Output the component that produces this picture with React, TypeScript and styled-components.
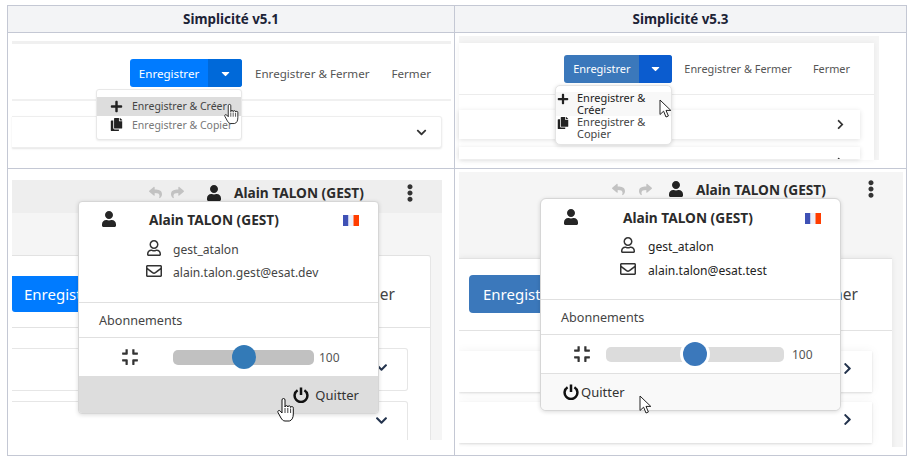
import React from 'react';
import styled, { createGlobalStyle, css } from 'styled-components';
import { FaCaretDown, FaChevronDown, FaChevronRight, FaCompress, FaCopy, FaEllipsisV, FaPlus, FaRegEnvelope, FaRegUser, FaReply, FaShare, FaUser } from 'react-icons/fa';

type Version = 'old' | 'new';

const GlobalStyle = createGlobalStyle`
  html, body {
    margin: 0;
    background: #fff;
    font-family: "Noto Sans", "Open Sans", sans-serif;
    color: #333;
  }
`;

const Table = styled.div`
  box-sizing: border-box;
  width: 900px;
  height: 451px;
  margin: 5px 0 0 7px;
  border: 1px solid #c4c8d4;
  border-width: 1px 0 0 1px;
  display: grid;
  grid-template-columns: 447px 452px;
  grid-template-rows: 27px 136px 287px;
`;

const HeadCell = styled.div`
  background: #f3f4f6;
  border: 1px solid #c4c8d4;
  border-width: 0 1px 1px 0;
  display: flex;
  align-items: center;
  justify-content: center;
  font-size: 13.4px;
  font-weight: 700;
  color: #1c2336;
`;

const Cell = styled.div`
  position: relative;
  border: 1px solid #c4c8d4;
  border-width: 0 1px 1px 0;
  overflow: hidden;
`;

/* top row: screenshots of the action bar */
const BarShot = styled.div<{ $v: Version }>`
  ${p => p.$v === 'old' ? css`
    margin: 8px 3px 0 4px;
    height: 112px;
    border-top: 3px solid #f0f0f0;
  ` : css`
    margin: 3px 27px 0 4px;
    height: 124px;
    background: #f5f5f5;
    padding: 7px 5px 0 0;
    box-sizing: border-box;
  `}
`;

const BarPanel = styled.div<{ $v: Version }>`
  background: #fff;
  height: 100%;
  ${p => p.$v === 'new' && css`box-shadow: 0 0 6px rgba(0, 0, 0, 0.06);`}
`;

const Actions = styled.div<{ $v: Version }>`
  display: flex;
  justify-content: flex-end;
  align-items: center;
  height: ${p => p.$v === 'old' ? '57px' : '52px'};
  padding: ${p => p.$v === 'old' ? '3px 20px 0 0' : '0 24px 0 0'};
  box-sizing: border-box;
  border-bottom: ${p => p.$v === 'old' ? '2px solid #f0f0f0' : '1px solid #ececec'};
`;

const SplitButton = styled.div<{ $v: Version }>`
  display: flex;
  height: 28px;
  width: ${p => p.$v === 'old' ? '112px' : '108px'};
  border-radius: 3px;
  overflow: hidden;
  color: #fff;
  font-size: ${p => p.$v === 'old' ? '11.6px' : '11px'};
  background: ${p => p.$v === 'old' ? '#007bff' : '#3b78bb'};
`;

const SplitLabel = styled.span`
  flex: 1;
  display: flex;
  align-items: center;
  justify-content: center;
`;

const SplitCaret = styled.span<{ $v: Version }>`
  width: ${p => p.$v === 'old' ? '34px' : '33px'};
  display: flex;
  align-items: center;
  justify-content: center;
  font-size: 13px;
  background: ${p => p.$v === 'old' ? '#0069d9' : '#0b5ccf'};
`;

const TextAction = styled.span<{ $v: Version; $gap: number }>`
  margin-left: ${p => p.$gap}px;
  font-size: ${p => p.$v === 'old' ? '11.6px' : '10.9px'};
  color: #555;
  white-space: nowrap;
`;

const BarCard = styled.div<{ $v: Version; $stub?: boolean }>`
  display: flex;
  align-items: center;
  justify-content: flex-end;
  background: #fff;
  font-size: 11px;
  color: #333;
  box-sizing: border-box;
  ${p => p.$v === 'old' ? css`
    height: 32px;
    margin: 15px 9px 0 0;
    padding-right: 14px;
    border: 1px solid #eee;
    border-left: 0;
    border-radius: 0 3px 3px 0;
    box-shadow: 0 1px 2px rgba(0, 0, 0, 0.1);
  ` : css`
    height: ${p.$stub ? '12px' : '29px'};
    margin: ${p.$stub ? '8px' : '15px'} 14px 0 0;
    padding-right: 14px;
    overflow: hidden;
    box-shadow: 0 1px 5px rgba(0, 0, 0, 0.12);
    ${p.$stub && css`
      align-items: flex-start;
      padding-top: 10px;
    `}
  `}
`;

const DropMenu = styled.div<{ $v: Version }>`
  position: absolute;
  background: #fff;
  box-sizing: border-box;
  font-size: 10.5px;
  ${p => p.$v === 'old' ? css`
    left: 88px;
    top: 56px;
    width: 146px;
    height: 51px;
    padding-top: 7px;
    border: 1px solid #e8e8e8;
    border-radius: 3px;
    box-shadow: 0 1px 2px rgba(0, 0, 0, 0.08);
    color: #666;
  ` : css`
    left: 100px;
    top: 52px;
    width: 117px;
    height: 60px;
    padding-top: 6px;
    border: 1px solid #e4e4e4;
    border-radius: 5px;
    box-shadow: 0 1px 4px rgba(0, 0, 0, 0.15);
    color: #444;
  `}
`;

const DropItem = styled.div<{ $v: Version; $hover?: boolean }>`
  display: flex;
  ${p => p.$v === 'old' ? css`
    height: 18.5px;
    align-items: center;
    padding-left: 13px;
    gap: 9px;
    background: ${p.$hover ? '#ddd' : 'transparent'};
    color: ${p.$hover ? '#444' : '#777'};
    & > svg { font-size: 13px; }
  ` : css`
    height: 24px;
    padding-left: 1px;
    gap: 8px;
    line-height: 12px;
    font-size: 11px;
    background: ${p.$hover ? '#f8f8f8' : 'transparent'};
    color: ${p.$hover ? '#222' : '#444'};
    & > svg { margin-top: 1px; font-size: 12px; }
  `}
  & > svg { color: #222; flex: none; }
`;

/* bottom row: screenshots of the user menu */
const UserShot = styled.div<{ $v: Version }>`
  background: #f5f5f5;
  ${p => p.$v === 'old' ? css`
    margin: 11px 12px 0 4px;
    height: 260px;
  ` : css`
    margin: 3px 3px 0 4px;
    height: 275px;
  `}
  overflow: hidden;
`;

const TopBar = styled.div<{ $v: Version }>`
  display: flex;
  align-items: center;
  height: ${p => p.$v === 'old' ? '33px' : '34px'};
  background: ${p => p.$v === 'old' ? '#eee' : '#f5f5f5'};
  font-size: 13.7px;
  font-weight: 700;
  color: #2b2b2b;
  padding-left: ${p => p.$v === 'old' ? '137px' : '153px'};
  padding-bottom: ${p => p.$v === 'old' ? '8px' : '0'};
  box-sizing: border-box;
`;

const HistoryIcon = styled.span<{ $gap: number }>`
  display: flex;
  color: #c2c2c2;
  font-size: 13px;
  margin-right: ${p => p.$gap}px;
`;

const BarUserIcon = styled(FaUser)`
  font-size: 16px;
  margin-right: 12px;
  color: #222;
`;

const BarKebab = styled(FaEllipsisV)<{ $gap: number }>`
  margin-left: ${p => p.$gap}px;
  font-size: 18px;
  color: #333;
`;

const Spacer = styled.div<{ $h: number }>`
  height: ${p => p.$h}px;
`;

const PagePanel = styled.div<{ $v: Version }>`
  background: #fff;
  margin-right: 11px;
  height: 100%;
  border-top: 1px solid #e2e2e2;
  ${p => p.$v === 'old' && css`
    border-right: 1px solid #e6e6e6;
    border-radius: 0 3px 0 0;
  `}
  ${p => p.$v === 'new' && css`box-shadow: 0 0 6px rgba(0, 0, 0, 0.08);`}
`;

const PageHead = styled.div<{ $v: Version }>`
  display: flex;
  align-items: center;
  justify-content: space-between;
  height: 72px;
  padding: ${p => p.$v === 'old' ? '4px 35px 0 0' : '0 34px 2px 10px'};
  box-sizing: border-box;
  border-bottom: 1px solid #e2e2e2;
  font-size: 15.5px;
  color: #444;
`;

const BigButton = styled.span<{ $v: Version }>`
  display: flex;
  align-items: center;
  height: ${p => p.$v === 'old' ? '36px' : '38px'};
  width: 90px;
  padding-left: ${p => p.$v === 'old' ? '12px' : '14px'};
  box-sizing: border-box;
  color: #fff;
  font-size: 15px;
  border-radius: ${p => p.$v === 'old' ? '0 0 0 3px' : '4px'};
  background: ${p => p.$v === 'old' ? '#007bff' : '#3b78bb'};
`;

const PageCard = styled.div<{ $v: Version; $first?: boolean }>`
  display: flex;
  justify-content: flex-end;
  background: #fff;
  font-size: 13px;
  color: #23334d;
  box-sizing: border-box;
  ${p => p.$v === 'old' ? css`
    height: ${p.$first ? '43px' : '60px'};
    margin: ${p.$first ? '20px' : '10px'} 22px 0 0;
    padding: 12px 19px 0 0;
    border: 1px solid #e6e6e6;
    border-left: 0;
    border-radius: 0 3px 3px 0;
  ` : css`
    height: 41px;
    margin: ${p.$first ? '20px' : '10px'} 20px 0 0;
    padding: 11px 18px 0 0;
    box-shadow: 0 1px 2px rgba(0, 0, 0, 0.12), 0 0 10px rgba(0, 0, 0, 0.05);
  `}
`;

const Popover = styled.div<{ $v: Version }>`
  position: absolute;
  width: 301px;
  height: 213px;
  background: #fff;
  box-sizing: border-box;
  display: flex;
  flex-direction: column;
  border: 1px solid #d6d6d6;
  border-radius: ${p => p.$v === 'old' ? '4px' : '6px'};
  box-shadow: 0 1px 4px rgba(0, 0, 0, 0.14);
  overflow: hidden;
  left: ${p => p.$v === 'old' ? '70px' : '85px'};
  top: ${p => p.$v === 'old' ? '32px' : '29px'};
`;

const PopHead = styled.div<{ $v: Version }>`
  height: 101px;
  flex: none;
  border-bottom: 1px solid #e0e0e0;
  display: grid;
  box-sizing: border-box;
  align-items: center;
  font-size: 12.1px;
  color: ${p => p.$v === 'old' ? '#444' : '#222'};
  ${p => p.$v === 'old' ? css`
    grid-template-columns: 24px 24px 194px 1fr;
    grid-template-rows: 34px 27px 18px;
    padding: 0 0 0 22px;
  ` : css`
    grid-template-columns: 24px 36px 182px 1fr;
    grid-template-rows: 34px 25px 22px;
    padding: 1px 0 0 22px;
  `}
`;

const PopName = styled.span`
  font-size: 13.7px;
  font-weight: 700;
  color: #2b2b2b;
  white-space: nowrap;
`;

const PopUser = styled(FaUser)`
  font-size: 16px;
  color: #262626;
`;

const Flag = styled.svg`
  display: block;
  margin-top: 3px;
`;

const Detail = styled.div<{ $v: Version }>`
  grid-column: 2 / 5;
  display: flex;
  align-items: center;
  gap: ${p => p.$v === 'old' ? '11px' : '12px'};
  padding-left: ${p => p.$v === 'old' ? '21px' : '33px'};
  white-space: nowrap;
  & > svg { font-size: 16px; color: #333; flex: none; margin-top: -3px; }
`;

const Subscriptions = styled.div`
  height: 34px;
  flex: none;
  display: flex;
  align-items: center;
  padding-left: 20px;
  font-size: 12.6px;
  color: #444;
  border-bottom: 1px solid #e0e0e0;
`;

const ZoomRow = styled.div<{ $v: Version }>`
  height: ${p => p.$v === 'old' ? '38px' : '39px'};
  flex: none;
  display: flex;
  align-items: center;
  box-sizing: border-box;
  padding-left: ${p => p.$v === 'old' ? '42px' : '32px'};
  font-size: 12px;
  color: #555;
  ${p => p.$v === 'new' && 'border-bottom: 1px solid #e0e0e0;'}
  & > svg { font-size: 18px; color: #333; flex: none; }
`;

const Track = styled.div<{ $v: Version }>`
  position: relative;
  height: 15px;
  border-radius: 5px;
  background: ${p => p.$v === 'old' ? '#c1c1c1' : '#dcdcdc'};
  width: ${p => p.$v === 'old' ? '141px' : '178px'};
  margin: 0 ${p => p.$v === 'old' ? '5px' : '8px'} 0 ${p => p.$v === 'old' ? '34px' : '15px'};
`;

const Thumb = styled.div<{ $v: Version }>`
  position: absolute;
  top: 50%;
  left: 50%;
  width: 24px;
  height: 24px;
  border-radius: 50%;
  background: ${p => p.$v === 'old' ? '#337ab7' : '#3b78bb'};
  transform: translate(-50%, -50%);
  ${p => p.$v === 'new' && 'box-shadow: 0 0 0 3px #fff;'}
`;

const Quit = styled.div<{ $v: Version }>`
  flex: 1;
  display: flex;
  align-items: center;
  font-size: 13px;
  color: #333;
  ${p => p.$v === 'old' ? css`
    justify-content: flex-end;
    gap: 6px;
    background: #ddd;
    padding: 1px 19px 0 0;
  ` : css`
    gap: 2px;
    background: #f9f9f9;
    padding-left: 22px;
  `}
`;

const Cursor = styled.svg<{ $x: number; $y: number }>`
  position: absolute;
  left: ${p => p.$x}px;
  top: ${p => p.$y}px;
  overflow: visible;
`;

function PowerIcon () {
  return (
    <svg width={16} height={16} viewBox='0 0 16 16' fill='none' stroke='#111' strokeWidth='2.5'>
      <path d='M4.6 3.2 a6.4 6.4 0 1 0 6.8 0' />
      <path d='M8 .5 V8' />
    </svg>
  );
}

function HandCursor ({ x, y, scale = 1 }: { x: number; y: number; scale?: number }) {
  return (
    <Cursor $x={x} $y={y} width={18 * scale} height={24 * scale} viewBox='0 0 18 24'>
      <path
        d='M5 2 a1.5 1.5 0 0 1 3 0 V9 a1.4 1.4 0 0 1 2.8 0 a1.4 1.4 0 0 1 2.8 .5 a1.4 1.4 0 0 1 2.7 .7 V16 c0 4 -1.5 6.5 -4 7 H8 c-2 0 -3 -1.5 -4 -3 L1 14.5 c-.8 -1.5 1 -2.8 2.2 -1.5 L5 15 Z'
        fill='#fff'
        stroke='#111'
        strokeWidth='1'
        strokeLinejoin='round'
      />
      <path d='M8 10 V15 M10.8 10 V15 M13.6 10.5 V15' stroke='#111' strokeWidth='.8' fill='none' />
    </Cursor>
  );
}

function ArrowCursor ({ x, y }: { x: number; y: number }) {
  return (
    <Cursor $x={x} $y={y} width={13} height={20} viewBox='0 0 13 20'>
      <path
        d='M1 1 V15.5 L4.6 12.2 L7 18 L9.4 17 L7 11.4 H11.8 Z'
        fill='#fff'
        stroke='#222'
        strokeWidth='1'
        strokeLinejoin='round'
      />
    </Cursor>
  );
}

function FranceFlag () {
  return (
    <Flag width={16} height={11} viewBox='0 0 16 11'>
      <rect width={5.5} height={11} fill='#3f51b5' />
      <rect x={5.5} width={5} height={11} fill='#eceff8' />
      <rect x={10.5} width={5.5} height={11} fill='#ff3d00' />
    </Flag>
  );
}

function ActionBar ({ v }: { v: Version }) {
  const Chevron = v === 'old' ? FaChevronDown : FaChevronRight;

  return (
    <BarPanel $v={v}>
      <Actions $v={v}>
        <SplitButton $v={v}>
          <SplitLabel>Enregistrer</SplitLabel>
          <SplitCaret $v={v}><FaCaretDown /></SplitCaret>
        </SplitButton>
        <TextAction $v={v} $gap={v === 'old' ? 13 : 12}>Enregistrer &amp; Fermer</TextAction>
        <TextAction $v={v} $gap={v === 'old' ? 22 : 21}>Fermer</TextAction>
      </Actions>
      <BarCard $v={v}><Chevron /></BarCard>
      {v === 'new' && <BarCard $v={v} $stub><Chevron /></BarCard>}
    </BarPanel>
  );
}

function SaveMenu ({ v }: { v: Version }) {
  return (
    <DropMenu $v={v}>
      <DropItem $v={v} $hover><FaPlus /><span>Enregistrer &amp; Créer</span></DropItem>
      <DropItem $v={v}><FaCopy /><span>Enregistrer &amp; Copier</span></DropItem>
    </DropMenu>
  );
}

function UserPage ({ v, email }: { v: Version; email: string }) {
  const Chevron = v === 'old' ? FaChevronDown : FaChevronRight;

  return (
    <>
      <UserShot $v={v}>
        <TopBar $v={v}>
          <HistoryIcon $gap={v === 'old' ? 9 : 14}><FaReply /></HistoryIcon>
          <HistoryIcon $gap={v === 'old' ? 22 : 16}><FaShare /></HistoryIcon>
          <BarUserIcon />
          <span>Alain TALON (GEST)</span>
          <BarKebab $gap={v === 'old' ? 37 : 36} />
        </TopBar>
        <Spacer $h={v === 'old' ? 42 : 52} />
        <PagePanel $v={v}>
          <PageHead $v={v}>
            <BigButton $v={v}>Enregistrer</BigButton>
            <span>Fermer</span>
          </PageHead>
          <PageCard $v={v} $first><Chevron /></PageCard>
          <PageCard $v={v}><Chevron /></PageCard>
        </PagePanel>
      </UserShot>
      <Popover $v={v}>
        <PopHead $v={v}>
          <PopUser />
          <span />
          <PopName>Alain TALON (GEST)</PopName>
          <FranceFlag />
          <Detail $v={v}><FaRegUser /><span>gest_atalon</span></Detail>
          <Detail $v={v}><FaRegEnvelope /><span>{email}</span></Detail>
        </PopHead>
        <Subscriptions>Abonnements</Subscriptions>
        <ZoomRow $v={v}>
          <FaCompress />
          <Track $v={v}><Thumb $v={v} /></Track>
          <span>100</span>
        </ZoomRow>
        <Quit $v={v}><PowerIcon /><span>Quitter</span></Quit>
      </Popover>
    </>
  );
}

export default function App () {
  return (
    <>
      <GlobalStyle />
      <Table>
        <HeadCell>Simplicité v5.1</HeadCell>
        <HeadCell>Simplicité v5.3</HeadCell>
        <Cell>
          <BarShot $v='old'><ActionBar v='old' /></BarShot>
          <SaveMenu v='old' />
          <HandCursor x={216} y={71} scale={0.85} />
        </Cell>
        <Cell>
          <BarShot $v='new'><ActionBar v='new' /></BarShot>
          <SaveMenu v='new' />
          <ArrowCursor x={204} y={66} />
        </Cell>
        <Cell>
          <UserPage v='old' email='alain.talon.gest@esat.dev' />
          <HandCursor x={269} y={229} />
        </Cell>
        <Cell>
          <UserPage v='new' email='alain.talon@esat.test' />
          <ArrowCursor x={184} y={226} />
        </Cell>
      </Table>
    </>
  );
}
